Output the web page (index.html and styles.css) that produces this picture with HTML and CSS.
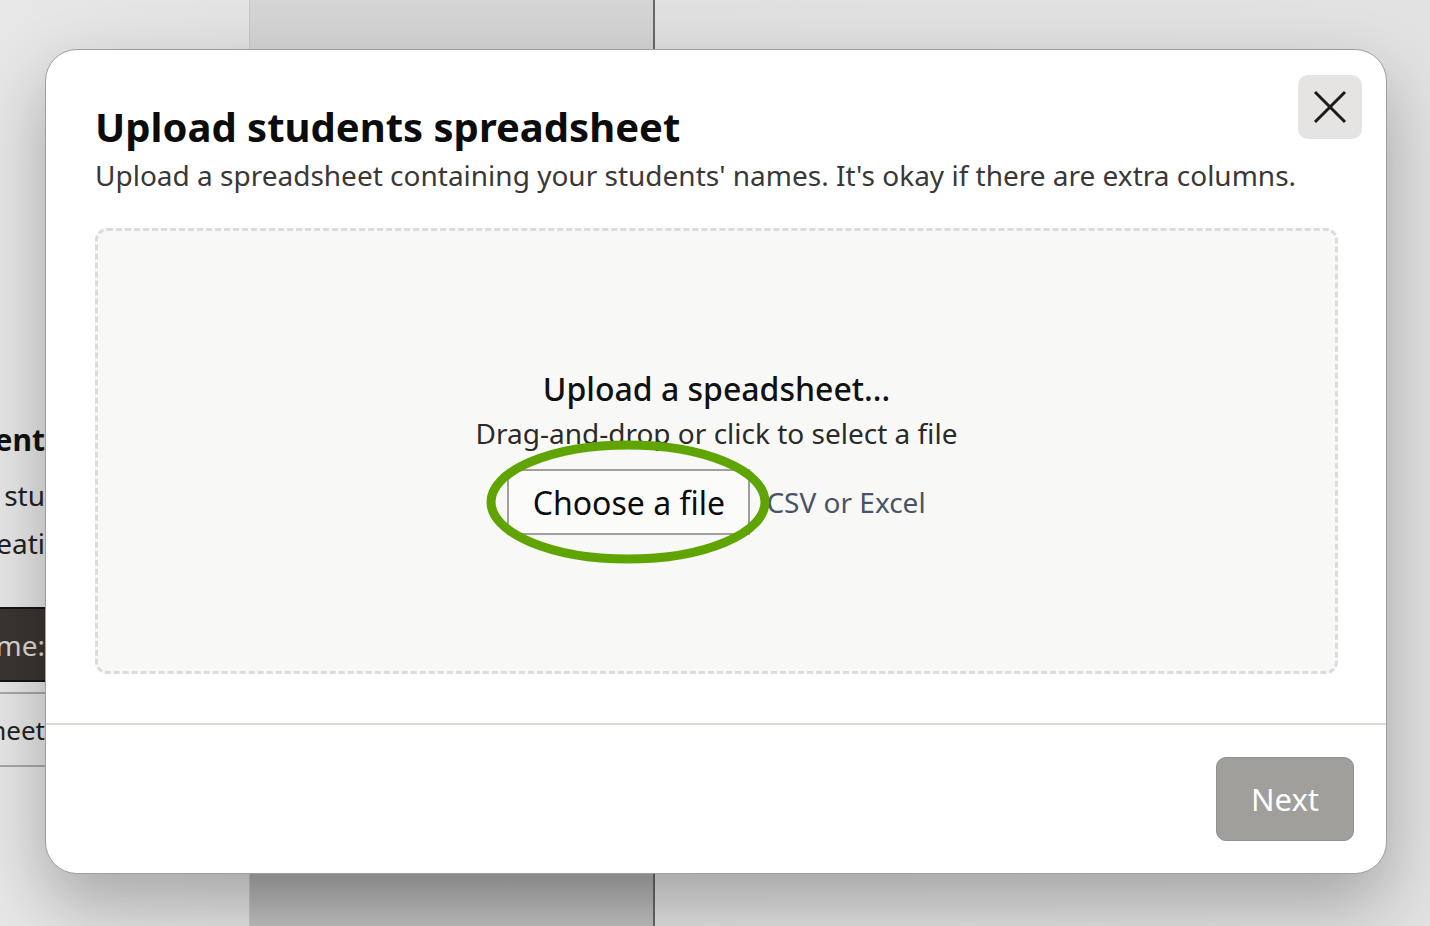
FILE: index.html
```html
<!DOCTYPE html>
<html lang="en">
<head>
    <meta charset="UTF-8">
    <meta name="viewport" content="width=device-width, initial-scale=1.0">
    <title>Upload students spreadsheet</title>
    <link rel="stylesheet" href="styles.css">
</head>
<body>
    <div class="page">
        <div class="side">
            <div class="side-inner">
                <div class="side-line side-title"><span>Student</span></div>
                <div class="side-line side-text gap"><span>Add your stu</span></div>
                <div class="side-line side-text"><span>by creati</span></div>
                <div class="side-line side-btn"><span>Name:</span></div>
                <div class="side-line side-row"><span>Spreadsheet</span></div>
            </div>
        </div>
        <div class="panel"></div>
        <div class="rest"></div>
    </div>

    <div class="modal">
        <button class="close" aria-label="Close">
            <svg width="34" height="34" viewBox="0 0 34 34">
                <path d="M2 2 L32 32 M32 2 L2 32" stroke="#1c1b1a" stroke-width="3" fill="none"/>
            </svg>
        </button>
        <div class="modal-body">
            <h1 class="title">Upload students spreadsheet</h1>
            <p class="subtitle">Upload a spreadsheet containing your students' names. It's okay if there are extra columns.</p>
            <div class="dropzone">
                <div class="drop-title">Upload a speadsheet...</div>
                <div class="drop-hint">Drag-and-drop or click to select a file</div>
                <div class="file-row">
                    <div class="choose-wrap">
                        <button class="choose">Choose a file</button>
                        <svg class="ring" width="290" height="128" viewBox="0 0 290 128">
                            <ellipse cx="145" cy="64" rx="137" ry="57" stroke="#5fa400" stroke-width="9" fill="none"/>
                        </svg>
                    </div>
                    <span class="file-types">CSV or Excel</span>
                </div>
            </div>
        </div>
        <div class="modal-footer">
            <button class="next">Next</button>
        </div>
    </div>
</body>
</html>
```

FILE: styles.css
```css
body {
    margin: 0;
    padding: 0;
    height: 926px;
    overflow: hidden;
    background-color: #e2e2e2;
    font-family: "Noto Sans", "Open Sans", sans-serif;
    color: #111;
}
.page {
    display: flex;
    height: 926px;
    background: linear-gradient(90deg, #e7e7e7, #e0e0e0 30%, #e2e2e2);
}
.side {
    width: 249px;
}
.side-inner {
    width: 45px;
    overflow: hidden;
    padding-top: 416px;
}
.side-line {
    display: flex;
    justify-content: flex-end;
    white-space: nowrap;
}
.side-title {
    font-size: 30px;
    font-weight: 700;
    line-height: 48px;
    color: #111;
}
.side-text {
    font-size: 28px;
    line-height: 48px;
    color: #222;
}
.side-text.gap {
    margin-top: 7px;
}
.side-btn {
    margin-top: 40px;
    height: 71px;
    align-items: center;
    background-color: #3a3531;
    border-top: 2px solid #161412;
    border-bottom: 2px solid #161412;
    color: #dcd8d4;
    font-size: 28px;
}
.side-row {
    margin-top: 10px;
    border-top: 2px solid #a8a8a8;
    border-bottom: 2px solid #a8a8a8;
    height: 71px;
    align-items: center;
    font-size: 26px;
    color: #222;
}
.panel {
    width: 403px;
    background: linear-gradient(180deg, #d4d4d4 0%, #d2d2d2 80%, #b2b2b2 95%, #c0c0c0 100%);
    border-left: 1px solid #c6c6c6;
    border-right: 2px solid #6a6664;
}
.rest {
    flex: 1;
}
.modal {
    position: absolute;
    left: 45px;
    top: 49px;
    width: 1340px;
    height: 823px;
    background-color: #fff;
    border: 1px solid #a29e9a;
    border-radius: 32px;
    box-shadow: 0 30px 70px rgba(0, 0, 0, 0.28);
    display: flex;
    flex-direction: column;
}
.close {
    position: absolute;
    top: 25px;
    right: 24px;
    width: 64px;
    height: 64px;
    border: none;
    border-radius: 10px;
    background-color: #e6e4e2;
    display: flex;
    align-items: center;
    justify-content: center;
    padding: 0;
    cursor: pointer;
}
.modal-body {
    padding: 50px 48px 49px 49px;
    border-bottom: 2px solid #dcd8d4;
}
.title {
    margin: 0;
    font-size: 40px;
    font-weight: 700;
    line-height: 54px;
    color: #0c0c0c;
}
.subtitle {
    margin: 0;
    font-size: 28px;
    line-height: 42px;
    color: #3a3836;
}
.dropzone {
    margin-top: 32px;
    height: 440px;
    background-color: #f8f8f7;
    border: 3px dashed #dcdcda;
    border-radius: 12px;
    display: flex;
    flex-direction: column;
    align-items: center;
    justify-content: center;
}
.drop-title {
    font-size: 32px;
    font-weight: 500;
    line-height: 44px;
    color: #111;
}
.drop-hint {
    font-size: 28px;
    line-height: 44px;
    color: #2c2a28;
}
.file-row {
    display: flex;
    align-items: center;
    gap: 16px;
    margin-top: 14px;
}
.choose-wrap {
    position: relative;
}
.choose {
    width: 243px;
    height: 66px;
    background-color: #fbfbfa;
    border: 2px solid #a29e9a;
    font-family: inherit;
    font-size: 32px;
    color: #0c0c0c;
    padding: 0;
}
.ring {
    position: absolute;
    left: -24px;
    top: -31px;
}
.file-types {
    font-size: 28px;
    color: #4a5366;
}
.modal-footer {
    flex: 1;
    display: flex;
    justify-content: flex-end;
    align-items: flex-start;
    padding: 32px 32px 0 0;
}
.next {
    width: 138px;
    height: 84px;
    background-color: #a19f9c;
    border: 1px solid #918f8c;
    border-radius: 10px;
    color: #fff;
    font-family: inherit;
    font-size: 31px;
}
```
